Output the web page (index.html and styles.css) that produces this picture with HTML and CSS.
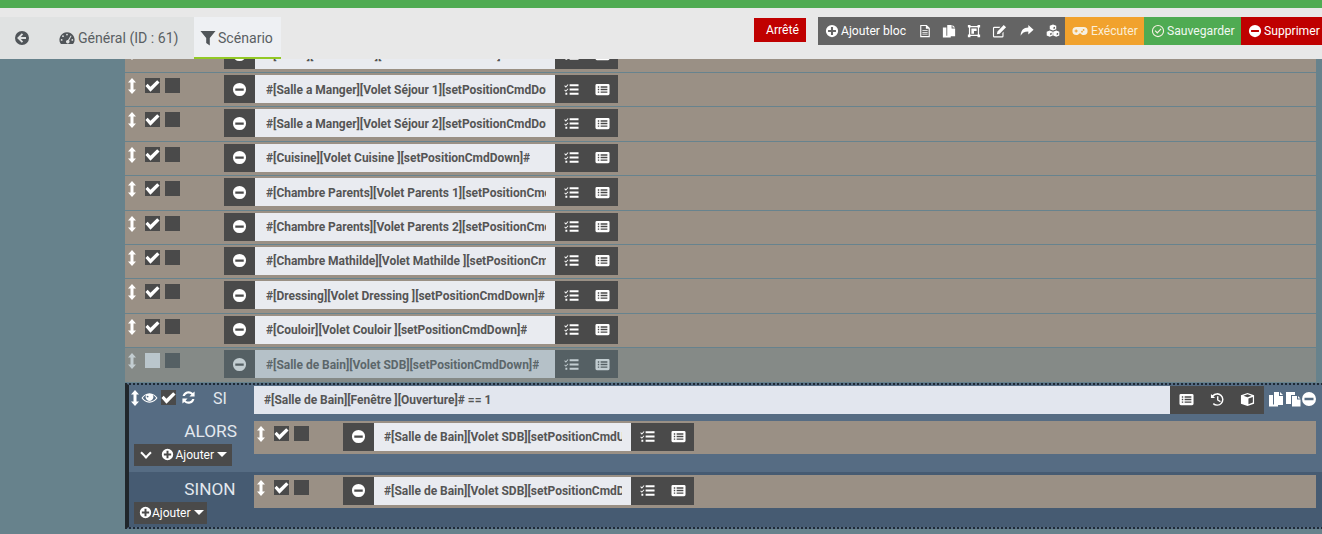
FILE: index.html
```html
<!DOCTYPE html>
<html lang="fr">
<head>
<meta charset="utf-8">
<title>Scénario</title>
<link rel="stylesheet" href="styles.css">
</head>
<body>
<svg class="defs" aria-hidden="true">
  <symbol id="v" viewBox="0 0 8 16"><path d="M4 0l4 4.500H5.500v7H8L4 16 0 11.500h2.500v-7H0z"/></symbol>
  <symbol id="check" viewBox="0 0 16 16"><path d="M.5 8.500l2.300-2.300 3 3L13 2.500l2.500 2.400-9.700 9.700z"/></symbol>
  <symbol id="minus" viewBox="0 0 16 16"><path fill-rule="evenodd" d="M8 1a7 7 0 1 0 0 14A7 7 0 0 0 8 1zM3.500 6.800h9v2.400h-9z"/></symbol>
  <symbol id="plus" viewBox="0 0 16 16"><path fill-rule="evenodd" d="M8 1a7 7 0 1 0 0 14A7 7 0 0 0 8 1zM6.800 3.500h2.400v3.300h3.300v2.400H9.200v3.300H6.800V9.200H3.500V6.800h3.300z"/></symbol>
  <symbol id="tasks" viewBox="0 0 16 16"><path d="M6 2.500h9.500v2H6zM6 7h9.500v2H6zM6 11.500h9.500v2H6zM1 3.500l1 1 2-2.200.7.700L2 6 .3 4.200zM1 8l1 1 2-2.200.7.700L2 10.500.3 8.700zM1.500 11.500h2v2h-2z"/></symbol>
  <symbol id="list" viewBox="0 0 16 16"><path fill-rule="evenodd" d="M2 2h12a1.500 1.500 0 0 1 1.500 1.500v9A1.500 1.500 0 0 1 14 14H2a1.500 1.500 0 0 1-1.500-1.500v-9A1.500 1.500 0 0 1 2 2zM3 4.600V6h1.500V4.600zM6 4.600V6h7.200V4.600zM3 7.300v1.400h1.500V7.300zM6 7.300v1.400h7.200V7.300zM3 10v1.400h1.500V10zM6 10v1.400h7.200V10z"/></symbol>
  <symbol id="back" viewBox="0 0 16 16"><path fill-rule="evenodd" d="M8 1a7 7 0 1 0 0 14A7 7 0 0 0 8 1zM7.800 3.300l1.300 1.300-2.300 2.300h5.200v2.200H6.800l2.300 2.300-1.300 1.300L3.100 8z"/></symbol>
  <symbol id="gauge" viewBox="0 0 18 16"><path fill-rule="evenodd" d="M9 1.500a8.500 8.500 0 0 0-7.300 12.800c.2.300.5.500.8.500h13c.3 0 .6-.2.8-.5A8.500 8.500 0 0 0 9 1.500zM9 3.200a1 1 0 1 1 0 2 1 1 0 0 1 0-2zM4.500 5a1 1 0 1 1 0 2 1 1 0 0 1 0-2zM3 9.200a1 1 0 1 1 0 2 1 1 0 0 1 0-2zM15 9.200a1 1 0 1 1 0 2 1 1 0 0 1 0-2zM13.200 5.200l.9.600-2.800 5a2 2 0 1 1-3.400 1.700 2 2 0 0 1 2.200-2.200z"/></symbol>
  <symbol id="filter" viewBox="0 0 16 16"><path d="M.5 1h15L9.800 8v7.500L6.200 13V8z"/></symbol>
  <symbol id="file" viewBox="0 0 16 16"><path fill-rule="evenodd" d="M2.500 1H10l3.500 3.500V15h-11zM3.800 2.300v11.400h8.400V5.500H9V2.300zM5 7h6v1.100H5zM5 9h6v1.100H5zM5 11h6v1.100H5z"/></symbol>
  <symbol id="copy" viewBox="0 0 16 16"><path d="M6 1h5v4h4v9H6zM12 1l3 3h-3zM1 4h4v9.500h5V15.500H1z"/></symbol>
  <symbol id="group" viewBox="0 0 16 16"><path fill-rule="evenodd" d="M1 1h3v1.200h8V1h3v3h-1.200v8H15v3h-3v-1.200H4V15H1v-3h1.200V4H1zM3.600 4v8H4v.4h8V12h.4V4H12v-.4H4V4zM5 5h6v3h-3v3H5z"/></symbol>
  <symbol id="edit" viewBox="0 0 16 16"><path d="M2.500 3H9L7.800 4.200H2.500a.3.300 0 0 0-.3.300v8.300c0 .2.100.3.300.3h8.300c.2 0 .3-.1.300-.3V9.500l1.200-1.200v4.700a1.500 1.500 0 0 1-1.500 1.500H2.500A1.500 1.500 0 0 1 1 13V4.500A1.500 1.500 0 0 1 2.500 3zM12.500 1l2.500 2.500-6.800 6.800-3 .6.600-3z"/></symbol>
  <symbol id="share" viewBox="0 0 16 16"><path d="M15.500 6.500L9.500 1v3C4 4.300 1 7 .7 13.500c1.700-3.500 4.300-5 8.800-5V12z"/></symbol>
  <symbol id="cubes" viewBox="0 0 16 16"><path fill-rule="evenodd" d="M8 .5l3.700 1.400v4L8 7.400 4.300 5.900v-4zM8.500 3.700v2.100l1.800-.7V3zM4.300 7.500l3.500 1.400v4.100l-3.500 1.600L.8 13V8.900zM4.800 10.700v2.200l1.700-.8v-2.100zM11.700 7.500l3.500 1.400v4.100l-3.500 1.600L8.200 13V8.900zM12.200 10.700v2.200l1.700-.8v-2.100z"/></symbol>
  <symbol id="pad" viewBox="0 0 20 16"><path fill-rule="evenodd" d="M5.500 3h9a5 5 0 0 1 0 10c-1.500 0-2.700-.8-3.500-2H9c-.8 1.200-2 2-3.500 2a5 5 0 0 1 0-10zM4.500 6v1.300H3.200v1.400h1.300V10h1.400V8.700h1.300V7.300H5.900V6zM14.500 5.500a1.100 1.100 0 1 0 0 2.200 1.100 1.100 0 0 0 0-2.200zM12.500 7.800a1.100 1.100 0 1 0 0 2.200 1.100 1.100 0 0 0 0-2.200z"/></symbol>
  <symbol id="ok" viewBox="0 0 16 16"><path fill-rule="evenodd" d="M8 1a7 7 0 1 0 0 14A7 7 0 0 0 8 1zM8 2.300a5.700 5.700 0 1 1 0 11.400A5.700 5.700 0 0 1 8 2.300zM11 5l1 1-4.800 5L4.200 8l1-1 2 2z"/></symbol>
  <symbol id="eye" viewBox="0 0 18 16"><path fill-rule="evenodd" d="M9 3c3.700 0 6.700 2.300 8.500 5-1.800 2.700-4.800 5-8.500 5S2.300 10.700.5 8C2.300 5.300 5.300 3 9 3zM5.600 4.900C4 5.500 2.800 6.700 2 8c1.500 2.200 4 3.800 7 3.800s5.500-1.600 7-3.800c-.8-1.300-2-2.500-3.600-3.100a4 4 0 1 1-6.800 0zM7 5.500a1 1 0 1 0 0 2 1 1 0 0 0 0-2z"/></symbol>
  <symbol id="sync" viewBox="0 0 16 16"><path d="M14.500 1.500V7H9l2.100-2.100A4.300 4.300 0 0 0 4 6.500H1.700a6.500 6.500 0 0 1 10.900-3.400zM1.500 14.500V9H7l-2.100 2.100A4.300 4.300 0 0 0 12 9.500h2.300a6.500 6.500 0 0 1-10.900 3.400z"/></symbol>
  <symbol id="history" viewBox="0 0 16 16"><path d="M1 2l1.500 1.500A6.800 6.800 0 1 1 3 13l1-1.200A5.200 5.200 0 1 0 3.700 4.700L5.500 6.500H1zM7.500 4.500H9v3.700l2.500 1.500-.7 1.200-3.300-2z"/></symbol>
  <symbol id="cube" viewBox="0 0 16 16"><path fill-rule="evenodd" d="M8 1l7 2.500v9L8 15l-7-2.500v-9zM3.700 4L8 5.500 12.300 4 8 2.500zM9 7v6l4.700-1.700v-6z"/></symbol>
  <symbol id="paste" viewBox="0 0 16 16"><path d="M1 1h9v3H6v9H1zM7 5h5v3.500h3.500V15.500H7zM13 5l2.500 2.500H13z"/></symbol>
</svg>

<header class="topbar">
  <nav class="tabs">
    <a class="tab back"><svg class="ic"><use href="#back"/></svg></a>
    <a class="tab general"><svg class="ic"><use href="#gauge"/></svg>Général (ID : 61)</a>
    <a class="tab active"><svg class="ic"><use href="#filter"/></svg>Scénario</a>
  </nav>
  <div class="actions">
    <span class="state">Arrêté</span>
    <div class="toolbar">
      <span class="tool add"><svg class="ic i14"><use href="#plus"/></svg>Ajouter bloc</span>
      <span class="tool"><svg class="ic i14"><use href="#file"/></svg></span>
      <span class="tool"><svg class="ic i14"><use href="#copy"/></svg></span>
      <span class="tool"><svg class="ic i14"><use href="#group"/></svg></span>
      <span class="tool"><svg class="ic i15"><use href="#edit"/></svg></span>
      <span class="tool"><svg class="ic i14"><use href="#share"/></svg></span>
      <span class="tool"><svg class="ic i14"><use href="#cubes"/></svg></span>
    </div>
    <span class="act run"><svg class="ic padicon"><use href="#pad"/></svg>Exécuter</span>
    <span class="act save"><svg class="ic i14"><use href="#ok"/></svg>Sauvegarder</span>
    <span class="act del"><svg class="ic i14"><use href="#minus"/></svg>Supprimer</span>
  </div>
</header>

<main class="content">
  <section class="list">
    <div class="row"><div class="ctl"><svg class="ic handle"><use href="#v"/></svg><span class="box on"><svg class="ic"><use href="#check"/></svg></span><span class="box"></span></div><div class="cmd"><span class="minus"><svg class="ic i15"><use href="#minus"/></svg></span><div class="field"><span>#[Salon][Volet Salon][setPositionCmdDown]#</span></div><div class="tools"><svg class="ic i15"><use href="#tasks"/></svg><svg class="ic i15"><use href="#list"/></svg></div></div></div>
    <div class="row"><div class="ctl"><svg class="ic handle"><use href="#v"/></svg><span class="box on"><svg class="ic"><use href="#check"/></svg></span><span class="box"></span></div><div class="cmd"><span class="minus"><svg class="ic i15"><use href="#minus"/></svg></span><div class="field"><span>#[Salle a Manger][Volet Séjour 1][setPositionCmdDown]#</span></div><div class="tools"><svg class="ic i15"><use href="#tasks"/></svg><svg class="ic i15"><use href="#list"/></svg></div></div></div>
    <div class="row"><div class="ctl"><svg class="ic handle"><use href="#v"/></svg><span class="box on"><svg class="ic"><use href="#check"/></svg></span><span class="box"></span></div><div class="cmd"><span class="minus"><svg class="ic i15"><use href="#minus"/></svg></span><div class="field"><span>#[Salle a Manger][Volet Séjour 2][setPositionCmdDown]#</span></div><div class="tools"><svg class="ic i15"><use href="#tasks"/></svg><svg class="ic i15"><use href="#list"/></svg></div></div></div>
    <div class="row"><div class="ctl"><svg class="ic handle"><use href="#v"/></svg><span class="box on"><svg class="ic"><use href="#check"/></svg></span><span class="box"></span></div><div class="cmd"><span class="minus"><svg class="ic i15"><use href="#minus"/></svg></span><div class="field"><span>#[Cuisine][Volet Cuisine ][setPositionCmdDown]#</span></div><div class="tools"><svg class="ic i15"><use href="#tasks"/></svg><svg class="ic i15"><use href="#list"/></svg></div></div></div>
    <div class="row"><div class="ctl"><svg class="ic handle"><use href="#v"/></svg><span class="box on"><svg class="ic"><use href="#check"/></svg></span><span class="box"></span></div><div class="cmd"><span class="minus"><svg class="ic i15"><use href="#minus"/></svg></span><div class="field"><span>#[Chambre Parents][Volet Parents 1][setPositionCmdDown]#</span></div><div class="tools"><svg class="ic i15"><use href="#tasks"/></svg><svg class="ic i15"><use href="#list"/></svg></div></div></div>
    <div class="row"><div class="ctl"><svg class="ic handle"><use href="#v"/></svg><span class="box on"><svg class="ic"><use href="#check"/></svg></span><span class="box"></span></div><div class="cmd"><span class="minus"><svg class="ic i15"><use href="#minus"/></svg></span><div class="field"><span>#[Chambre Parents][Volet Parents 2][setPositionCmdDown]#</span></div><div class="tools"><svg class="ic i15"><use href="#tasks"/></svg><svg class="ic i15"><use href="#list"/></svg></div></div></div>
    <div class="row"><div class="ctl"><svg class="ic handle"><use href="#v"/></svg><span class="box on"><svg class="ic"><use href="#check"/></svg></span><span class="box"></span></div><div class="cmd"><span class="minus"><svg class="ic i15"><use href="#minus"/></svg></span><div class="field"><span>#[Chambre Mathilde][Volet Mathilde ][setPositionCmdDown]#</span></div><div class="tools"><svg class="ic i15"><use href="#tasks"/></svg><svg class="ic i15"><use href="#list"/></svg></div></div></div>
    <div class="row"><div class="ctl"><svg class="ic handle"><use href="#v"/></svg><span class="box on"><svg class="ic"><use href="#check"/></svg></span><span class="box"></span></div><div class="cmd"><span class="minus"><svg class="ic i15"><use href="#minus"/></svg></span><div class="field"><span>#[Dressing][Volet Dressing ][setPositionCmdDown]#</span></div><div class="tools"><svg class="ic i15"><use href="#tasks"/></svg><svg class="ic i15"><use href="#list"/></svg></div></div></div>
    <div class="row"><div class="ctl"><svg class="ic handle"><use href="#v"/></svg><span class="box on"><svg class="ic"><use href="#check"/></svg></span><span class="box"></span></div><div class="cmd"><span class="minus"><svg class="ic i15"><use href="#minus"/></svg></span><div class="field"><span>#[Couloir][Volet Couloir ][setPositionCmdDown]#</span></div><div class="tools"><svg class="ic i15"><use href="#tasks"/></svg><svg class="ic i15"><use href="#list"/></svg></div></div></div>
    <div class="row faded"><div class="ctl"><svg class="ic handle"><use href="#v"/></svg><span class="box on"></span><span class="box"></span></div><div class="cmd"><span class="minus"><svg class="ic i15"><use href="#minus"/></svg></span><div class="field"><span>#[Salle de Bain][Volet SDB][setPositionCmdDown]#</span></div><div class="tools"><svg class="ic i15"><use href="#tasks"/></svg><svg class="ic i15"><use href="#list"/></svg></div></div></div>
  </section>

  <section class="block">
    <div class="si">
      <div class="si-ctl">
        <svg class="ic handle"><use href="#v"/></svg>
        <svg class="ic eye"><use href="#eye"/></svg>
        <span class="box on"><svg class="ic"><use href="#check"/></svg></span>
        <svg class="ic i15"><use href="#sync"/></svg>
        <span class="si-label">SI</span>
      </div>
      <div class="si-field">#[Salle de Bain][Fenêtre ][Ouverture]# == 1</div>
      <div class="si-tools">
        <svg class="ic i15"><use href="#list"/></svg>
        <svg class="ic i15"><use href="#history"/></svg>
        <svg class="ic i15"><use href="#cube"/></svg>
      </div>
      <div class="si-end">
        <svg class="ic"><use href="#copy"/></svg>
        <svg class="ic"><use href="#paste"/></svg>
        <svg class="ic"><use href="#minus"/></svg>
      </div>
    </div>

    <div class="branch alors">
      <div class="side">
        <div class="label">ALORS</div>
        <div class="add-btn"><span class="chev"></span><svg class="ic i13"><use href="#plus"/></svg>Ajouter<span class="caret"></span></div>
      </div>
      <div class="row sub"><div class="ctl"><svg class="ic handle"><use href="#v"/></svg><span class="box on"><svg class="ic"><use href="#check"/></svg></span><span class="box"></span></div><div class="cmd"><span class="minus"><svg class="ic i15"><use href="#minus"/></svg></span><div class="field"><span>#[Salle de Bain][Volet SDB][setPositionCmdUp]#</span></div><div class="tools"><svg class="ic i15"><use href="#tasks"/></svg><svg class="ic i15"><use href="#list"/></svg></div></div></div>
    </div>

    <div class="branch sinon">
      <div class="side">
        <div class="label">SINON</div>
        <div class="add-btn"><svg class="ic i13"><use href="#plus"/></svg>Ajouter<span class="caret"></span></div>
      </div>
      <div class="row sub"><div class="ctl"><svg class="ic handle"><use href="#v"/></svg><span class="box on"><svg class="ic"><use href="#check"/></svg></span><span class="box"></span></div><div class="cmd"><span class="minus"><svg class="ic i15"><use href="#minus"/></svg></span><div class="field"><span>#[Salle de Bain][Volet SDB][setPositionCmdDown]#</span></div><div class="tools"><svg class="ic i15"><use href="#tasks"/></svg><svg class="ic i15"><use href="#list"/></svg></div></div></div>
    </div>
  </section>
</main>
</body>
</html>
```

FILE: styles.css
```css
* { box-sizing: border-box; }
html, body { margin: 0; height: 100%; overflow: hidden; }
body {
  font-family: Roboto, "Liberation Sans", sans-serif;
  background: #67828c;
  color: #555;
}
.defs { display: none; }
.ic { fill: #fff; display: block; flex: none; width: 16px; height: 16px; }
.i13 { width: 13px; height: 13px; }
.i14 { width: 14px; height: 14px; }
.i15 { width: 15px; height: 15px; }
.padicon { width: 16px; height: 14px; }

/* top bar */
.topbar {
  position: relative;
  z-index: 2;
  height: 59px;
  border-top: 8px solid #4fab52;
  background: #e8e8e8;
  display: flex;
  justify-content: space-between;
  padding-top: 9px;
}
.tabs { display: flex; height: 42px; }
.tab { display: flex; align-items: center; font-size: 14.1px; color: #5a5f63; gap: 3px; background: #e0e2e2; }
.tab .ic { fill: #505559; }
.back { width: 59px; padding-left: 14px; }
.general { width: 135px; }
.active {
  width: 87px;
  padding: 2px 0 0 6px;
  gap: 2px;
  background: #eef0f3;
  border-bottom: 2px solid #93c926;
}
.actions { display: flex; align-items: flex-start; width: 568px; flex: none; white-space: nowrap; }
.state {
  width: 52px; height: 24px; margin: 1px 12px 0 0; padding-left: 12px;
  background: #c00000; color: #fff; font-size: 12.2px;
  display: flex; align-items: center;
}
.toolbar {
  width: 247px; height: 28px; background: #646464; color: #fff;
  display: flex; align-items: center; font-size: 12.15px;
  padding-left: 7px;
}
.tool { display: flex; align-items: center; gap: 2px; flex: none; }
.tool:nth-child(1) { margin-right: 12px; }
.tool:nth-child(2) { margin-right: 9.5px; }
.tool:nth-child(3) { margin-right: 11px; }
.tool:nth-child(4) { margin-right: 11px; }
.tool:nth-child(5) { margin-right: 13px; }
.tool:nth-child(6) { margin-right: 12px; }
.act {
  height: 28px; color: #fff; font-size: 12.15px;
  display: flex; align-items: center; gap: 2px; padding-left: 7px; flex: none;
}
.run { width: 79px; background: #f1a22d; color: #fbeed9; gap: 3px; }
.run .ic, .save .ic { fill: #f6f0e2; }
.save { width: 97px; background: #4fab52; color: #f1f8f1; }
.del { width: 81px; background: #bf0000; }

/* content */
.content { height: 475px; overflow: hidden; padding-left: 125px; }
.list { width: 1191px; margin-top: -21.4px; }
.row {
  height: 34.4px;
  background: #9a9085;
  border-top: 1px solid #67838e;
  display: flex;
  padding-top: 2px;
}
.ctl { display: flex; align-items: flex-start; padding: 3px 0 0 3px; width: 99px; flex: none; }
.handle { width: 8px; height: 16px; margin-right: 9px; }
.box { width: 15px; height: 15px; background: #4a4a4a; margin-right: 5px; flex: none; }
.box .ic { width: 15px; height: 15px; }
.cmd { display: flex; height: 28px; }
.minus {
  width: 31px; height: 28px; background: #4a4a4a;
  display: flex; align-items: center; justify-content: center; flex: none;
}
.field {
  width: 300px; height: 28px; background: #e9ebf0;
  padding: 1px 9px 0 11px; display: flex; align-items: center;
  font-size: 12px; font-weight: 700; color: #555; letter-spacing: -.02px; overflow: hidden;
}
.field span { white-space: pre; overflow: hidden; display: block; }
.tools {
  width: 63px; height: 28px; background: #4a4a4a;
  display: flex; align-items: center; justify-content: space-between; padding: 0 8px 0 9px;
}
.faded { opacity: .6; }
.faded .box.on { background: #f2f4f8; }

/* SI block */
.block {
  width: 1210px;
  margin-top: 1px;
  border-top: 2px dotted #1e2a36;
  border-bottom: 2px dotted #1e2a36;
  border-left: 4px solid #20262b;
  background: #566c83;
}
.si { display: flex; height: 29px; padding-top: 1px; }
.si-ctl {
  width: 125px; flex: none; display: flex; align-items: flex-start;
  padding: 4px 0 0 2px;
}
.si-ctl .handle { margin-right: 2px; }
.si-ctl .eye { width: 17px; height: 16px; margin-right: 3px; }
.si-ctl .box { margin-right: 5px; }
.si-label { color: #e3e8ee; font-size: 16px; margin: -1px 0 0 17px; }
.si-field {
  width: 916px; height: 28px; background: #e2e6ee;
  font-size: 12px; font-weight: 700; color: #555; letter-spacing: -.02px;
  display: flex; align-items: center; padding-left: 10px;
}
.si-tools {
  width: 94px; height: 28px; background: #4a4a4a;
  display: flex; align-items: center; justify-content: space-between; padding: 0 9px;
}
.si-end { display: flex; align-items: flex-start; gap: .5px; margin: 5px 0 0 4px; }
.branch { display: grid; grid-template-columns: 125px 1062px; }
.alors { height: 58px; padding-top: 7px; }
.sinon { height: 55px; padding-top: 3px; background: #465b72; }
.side { display: flex; flex-direction: column; align-items: flex-start; padding-left: 5px; }
.label { align-self: flex-end; color: #e3e8ee; font-size: 17.3px; line-height: 20px; padding-right: 17px; }
.alors .add-btn { margin-top: 3px; }
.sinon .label { margin-top: 4px; padding-right: 18.5px; font-size: 17.2px; }
.sinon .add-btn { margin-top: 3px; padding: 0 3px 0 4.5px; gap: .5px; }
.sinon .caret { margin-left: 2.5px; }
.add-btn {
  height: 22px; background: #4a4a4a; color: #fff; font-size: 12px;
  display: flex; align-items: center; padding: 0 5px; gap: 2px;
}
.chev {
  width: 8px; height: 8px; margin: -3px 8.5px 0 3px;
  border-right: 2px solid #fff; border-bottom: 2px solid #fff; transform: rotate(45deg);
}
.caret {
  width: 0; height: 0; margin-left: .5px;
  border: 5px solid transparent; border-top-color: #fff; border-bottom: 0;
}
.row.sub { border-top: 0; height: 33px; }
.sub .ctl { width: 89px; }
.sub .field { width: 257px; padding-left: 10px; }
```
